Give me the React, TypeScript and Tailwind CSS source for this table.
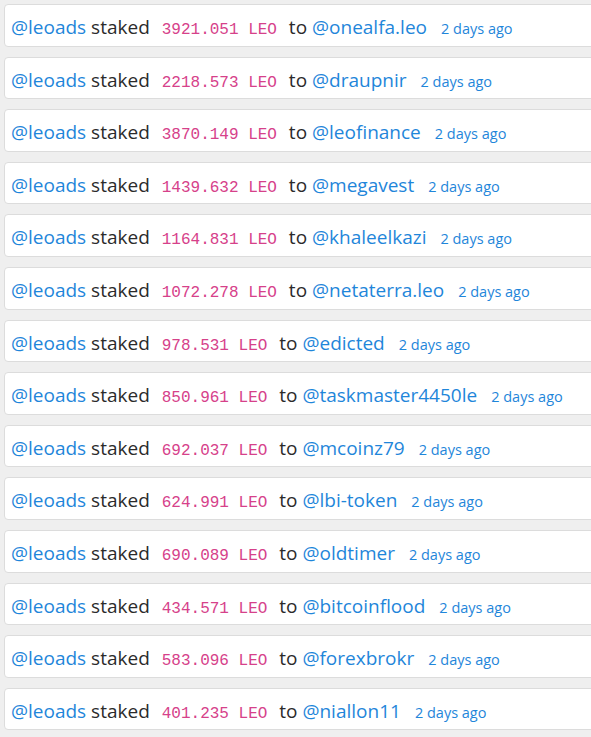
import React from "react";

interface StakeRow {
  to: string;
  amount: string;
}

const rows: StakeRow[] = [
  { amount: "3921.051", to: "onealfa.leo" },
  { amount: "2218.573", to: "draupnir" },
  { amount: "3870.149", to: "leofinance" },
  { amount: "1439.632", to: "megavest" },
  { amount: "1164.831", to: "khaleelkazi" },
  { amount: "1072.278", to: "netaterra.leo" },
  { amount: "978.531", to: "edicted" },
  { amount: "850.961", to: "taskmaster4450le" },
  { amount: "692.037", to: "mcoinz79" },
  { amount: "624.991", to: "lbi-token" },
  { amount: "690.089", to: "oldtimer" },
  { amount: "434.571", to: "bitcoinflood" },
  { amount: "583.096", to: "forexbrokr" },
  { amount: "401.235", to: "niallon11" },
];

const StakeItem = ({ amount, to }: StakeRow) => (
  <div className="mb-[10px] ml-1 -mr-4 h-[42.6px] rounded border border-[#dcdcdc] bg-white pl-[6px] leading-[44px] whitespace-nowrap">
    <a className="text-[#1f86da]">@leoads</a> staked{" "}
    <code className="px-[7px] font-['Liberation_Mono',monospace] text-[16px] text-[#d6418a]">{amount} LEO</code> to{" "}
    <a className="text-[#1f86da]">@{to}</a>
    <small className="ml-[14px] text-[14.5px] text-[#1f86da]">2 days ago</small>
  </div>
);

const App = () => {
  return (
    <div className="min-h-[737px] overflow-hidden bg-[#efefef] pt-1 font-['Open_Sans',sans-serif] text-[19px] text-[#2b2b2b]">
      {rows.map((row) => (
        <StakeItem key={row.to} amount={row.amount} to={row.to} />
      ))}
    </div>
  );
};

export default App;
